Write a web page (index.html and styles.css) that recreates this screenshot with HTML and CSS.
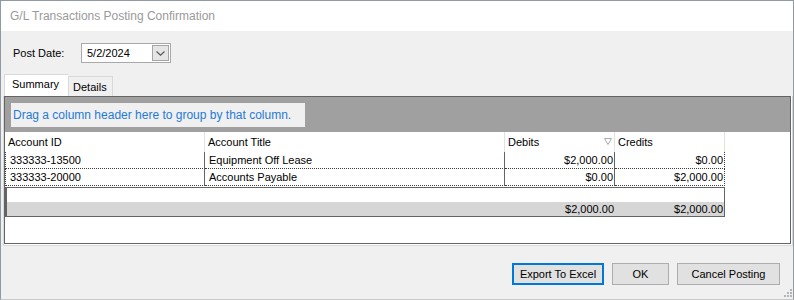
FILE: index.html
```html
<!DOCTYPE html>
<html lang="en">
<head>
  <meta charset="UTF-8" />
  <title>G/L Transactions Posting Confirmation</title>
  <link rel="stylesheet" href="styles.css">
</head>
<body>

  <div class="window">
    <div class="titlebar">G/L Transactions Posting Confirmation</div>

    <div class="client">
      <div class="date-row">
        <label class="date-label">Post Date:</label>
        <div class="date-box">
          <span class="date-value">5/2/2024</span>
          <span class="date-btn">
            <svg width="9" height="5" viewBox="0 0 9 5"><polyline points="0.5,0.5 4.5,4.2 8.5,0.5" fill="none" stroke="#555" stroke-width="1.1"/></svg>
          </span>
        </div>
      </div>

      <div class="tabs">
        <div class="tab active">Summary</div>
        <div class="tab">Details</div>
      </div>

      <div class="tab-page">
        <div class="grid">
          <div class="group-panel">
            <div class="group-hint">Drag a column header here to group by that column.</div>
          </div>

          <div class="row header">
            <div class="cell c1">Account ID</div>
            <div class="cell c2">Account Title</div>
            <div class="cell c3">Debits
              <svg class="filter" width="8" height="7" viewBox="0 0 8 7"><polygon points="0.5,0.5 7.5,0.5 4,6.5" fill="none" stroke="#a8a8a8" stroke-width="1"/></svg>
            </div>
            <div class="cell c4">Credits</div>
          </div>

          <div class="row data">
            <div class="cell c1">333333-13500</div>
            <div class="cell c2">Equipment Off Lease</div>
            <div class="cell c3 num">$2,000.00</div>
            <div class="cell c4 num">$0.00</div>
          </div>
          <div class="row data">
            <div class="cell c1">333333-20000</div>
            <div class="cell c2">Accounts Payable</div>
            <div class="cell c3 num">$0.00</div>
            <div class="cell c4 num">$2,000.00</div>
          </div>

          <div class="footer">
            <div class="footer-blank"></div>
            <div class="footer-totals">
              <div class="total t1">$2,000.00</div>
              <div class="total t2">$2,000.00</div>
            </div>
          </div>
        </div>
      </div>

      <div class="buttons">
        <button class="btn default">Export To Excel</button>
        <button class="btn ok">OK</button>
        <button class="btn cancel">Cancel Posting</button>
      </div>

      <div class="grip">
        <svg width="8" height="8" viewBox="0 0 8 8" fill="#b4b4b4">
          <rect x="6" y="0" width="2" height="2"/>
          <rect x="3" y="3" width="2" height="2"/><rect x="6" y="3" width="2" height="2"/>
          <rect x="0" y="6" width="2" height="2"/><rect x="3" y="6" width="2" height="2"/><rect x="6" y="6" width="2" height="2"/>
        </svg>
      </div>
    </div>
  </div>

</body>
</html>
```

FILE: styles.css
```css
body {
  margin: 0;
  padding: 0;
  font-family: "Liberation Sans", Arial, sans-serif;
  font-size: 11px;
  color: #000;
  background: #f0f0f0;
}

.window {
  width: 794px;
  height: 300px;
  box-sizing: border-box;
  border: 1px solid #8f9aa3;
  border-bottom-color: #c8c8c8;
  background: #f0f0f0;
  display: flex;
  flex-direction: column;
  overflow: hidden;
}

.titlebar {
  height: 30px;
  line-height: 31px;
  padding-left: 9px;
  background: #fff;
  color: #9a9a9a;
  font-size: 12px;
}

.client {
  position: relative;
  flex: 1;
}

.date-row {
  display: flex;
  align-items: center;
  padding: 12px 0 0 12px;
}

.date-label {
  width: 68px;
}

.date-box {
  width: 88px;
  height: 18px;
  border: 1px solid #a9a9a9;
  background: #fff;
  display: flex;
  align-items: center;
  justify-content: space-between;
}

.date-value {
  padding-left: 5px;
}

.date-btn {
  width: 15px;
  height: 14px;
  margin-right: 1px;
  border: 1px solid #a5a5a5;
  background: #e5e5e5;
  display: flex;
  align-items: center;
  justify-content: center;
}

.tabs {
  display: flex;
  align-items: flex-end;
  height: 22px;
  margin: 11px 0 0 3px;
}

.tab {
  height: 19px;
  line-height: 21px;
  padding: 0 5px 0 4px;
  border: 1px solid #d9d9d9;
  border-bottom: none;
  background: #f0f0f0;
}

.tab.active {
  height: 21px;
  line-height: 18px;
  padding: 0 9px 0 7px;
  background: #fff;
  border-right: none;
}

.tab-page {
  width: 787px;
  margin-left: 2px;
  padding: 0 1px 1px 0;
  border: 1px solid #d9d9d9;
  border-top: none;
  background: #fff;
}

.grid {
  height: 146px;
  border: 1px solid #646464;
  background: #fff;
}

.group-panel {
  height: 29px;
  padding: 6px 0 0 6px;
  background: #a0a0a0;
}

.group-hint {
  width: 292px;
  height: 24px;
  line-height: 25px;
  padding-left: 2px;
  background: #f0f0f0;
  color: #1f7ad9;
  font-size: 12px;
}

.row {
  display: flex;
}

.cell {
  box-sizing: border-box;
  white-space: nowrap;
}

.c1 { width: 200px; }
.c2 { width: 300px; }
.c3 { width: 110px; }
.c4 { width: 110px; }

.header .cell {
  height: 20px;
  line-height: 20px;
  padding-left: 3px;
  border-right: 1px solid #e2e2e2;
}

.header .c3 {
  display: flex;
  justify-content: space-between;
  align-items: center;
  padding-right: 2px;
}

.filter {
  margin-top: -2px;
}

.data .cell {
  height: 17px;
  line-height: 17px;
  padding-left: 4px;
  border-right: 1px solid #646464;
  border-bottom: 1px dotted #3c3c3c;
}

.data .c1 {
  border-left: 1px dotted #3c3c3c;
  padding-left: 4px;
}

.data .c2 {
  padding-left: 4px;
}

.data .c4 {
  border-right: 1px dotted #3c3c3c;
}

.data .num {
  text-align: right;
  padding-right: 1px;
}

.footer {
  width: 717px;
  margin-top: 1px;
  border: 1px solid #646464;
  border-left-width: 2px;
}

.footer-blank {
  height: 14px;
}

.footer-totals {
  height: 14px;
  line-height: 14px;
  background: #d6d6d6;
  display: flex;
  justify-content: flex-end;
}

.total {
  width: 110px;
  text-align: right;
}

.total.t1 {
  padding-right: 1px;
}

.total.t2 {
  width: 108px;
  padding-right: 1px;
}

.buttons {
  display: flex;
  justify-content: flex-end;
  gap: 8px;
  margin-top: 17px;
  padding-right: 13px;
}

.btn {
  height: 22px;
  padding: 0;
  font-family: "Liberation Sans", Arial, sans-serif;
  font-size: 11px;
  color: #000;
  background: #e1e1e1;
  border: 1px solid #adadad;
}

.btn.default {
  width: 92px;
  border: 2px solid #0078d7;
}

.btn.ok {
  width: 57px;
}

.btn.cancel {
  width: 103px;
}

.grip {
  position: absolute;
  right: 1px;
  bottom: 2px;
  line-height: 0;
}
```
